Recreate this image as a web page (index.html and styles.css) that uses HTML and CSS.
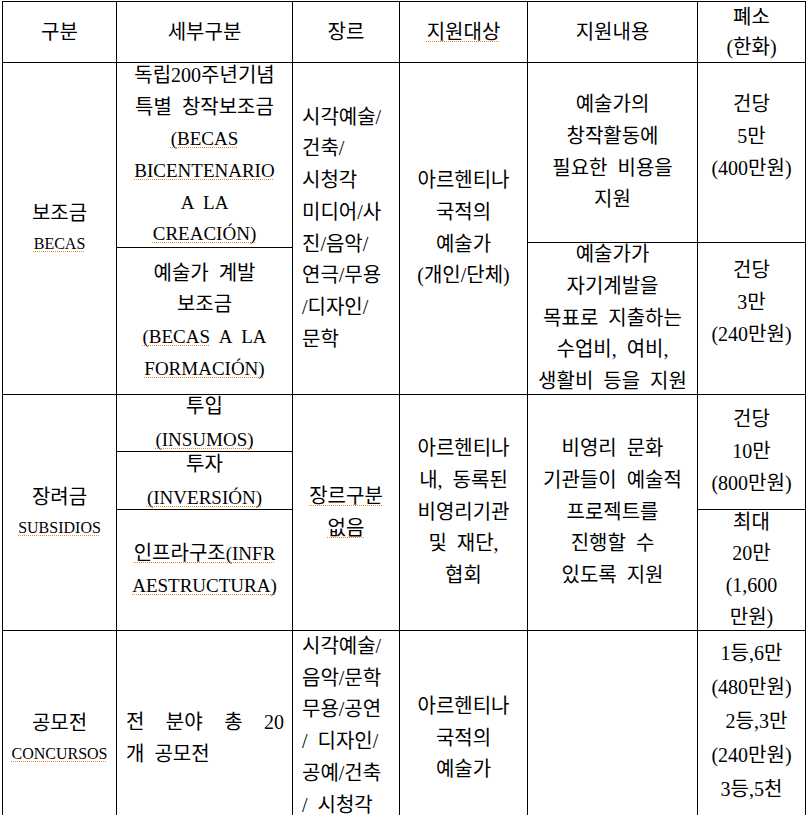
FILE: index.html
```html
<!DOCTYPE html>
<html lang="ko">
<head>
<meta charset="utf-8">
<title>지원 제도</title>
<link rel="stylesheet" href="styles.css">
</head>
<body>
<div class="sheet">
  <div class="cell head col1 r-h">구분</div>
  <div class="cell head col2 r-h">세부구분</div>
  <div class="cell head col3 r-h">장르</div>
  <div class="cell head col4 r-h"><span class="sp">지원대상</span></div>
  <div class="cell head col5 r-h">지원내용</div>
  <div class="cell head col6 r-h"><div>폐소<br>(한화)</div></div>

  <div class="cell gubun col1 r-becas"><div>보조금<br><span class="lat-s sp">BECAS</span></div></div>
  <div class="cell col2 r-bicent"><div>독립200주년기념<br>특별 창작보조금<br><span class="lt sp">(BECAS</span><br><span class="lt sp">BICENTENARIO</span><br><span class="lt">A LA</span><br><span class="lt sp">CREACIÓN)</span></div></div>
  <div class="cell col2 r-form"><div>예술가 계발<br>보조금<br><span class="lt"><span class="sp">(BECAS</span> A LA</span><br><span class="lt sp">FORMACIÓN)</span></div></div>
  <div class="cell left col3 r-becas"><div>시각예술/<br>건축/<br>시청각<br>미디어/사<br>진/음악/<br>연극/무용<br>/디자인/<br>문학</div></div>
  <div class="cell col4 r-becas"><div>아르헨티나<br>국적의<br>예술가<br>(개인/단체)</div></div>
  <div class="cell col5 r-top"><div>예술가의<br>창작활동에<br>필요한 비용을<br>지원</div></div>
  <div class="cell col6 r-top"><div>건당<br>5만<br>(400만원)<br>&nbsp;</div></div>
  <div class="cell col5 r-low"><div>예술가가<br>자기계발을<br>목표로 지출하는<br>수업비, 여비,<br>생활비 등을 지원</div></div>
  <div class="cell col6 r-low"><div>건당<br>3만<br>(240만원)<br>&nbsp;</div></div>

  <div class="cell gubun col1 r-sub"><div>장려금<br><span class="lat-s sp">SUBSIDIOS</span></div></div>
  <div class="cell tight col2 r-ins"><div>투입<br><span class="lt sp">(INSUMOS)</span></div></div>
  <div class="cell tight col2 r-inv"><div>투자<br><span class="lt sp">(INVERSIÓN)</span></div></div>
  <div class="cell col2 r-infra"><div><span class="sp">인프라구조<span class="lt">(INFR</span></span><br><span class="lt sp">AESTRUCTURA)</span></div></div>
  <div class="cell col3 r-sub"><div><span class="sp">장르구분</span><br><span class="sp">없음</span></div></div>
  <div class="cell col4 r-sub"><div>아르헨티나<br>내, 동록된<br>비영리기관<br>및 재단,<br>협회</div></div>
  <div class="cell col5 r-sub"><div>비영리 문화<br>기관들이 예술적<br>프로젝트를<br>진행할 수<br>있도록 지원</div></div>
  <div class="cell col6 r-sub10"><div>건당<br>10만<br>(800만원)</div></div>
  <div class="cell col6 r-infra"><div>최대<br>20만<br>(1,600<br>만원)</div></div>

  <div class="cell gubun col1 r-con"><div>공모전<br><span class="lat-s sp">CONCURSOS</span></div></div>
  <div class="cell spread col2 r-con">
    <div class="just"><span>전</span><span>분야</span><span>총</span><span>20</span></div>
    <div class="plain">개 공모전</div>
  </div>
  <div class="cell left top col3 r-con"><div>시각예술/<br>음악/문학<br>무용/공연<br>/ 디자인/<br>공예/건축<br>/ 시청각</div></div>
  <div class="cell col4 r-con"><div>아르헨티나<br>국적의<br>예술가</div></div>
  <div class="cell col5 r-con"></div>
  <div class="cell prize col6 r-con"><div>1등,6만<br>(480만원)<br>&nbsp;2등,3만<br>(240만원)<br>3등,5천</div></div>
</div>
</body>
</html>
```

FILE: styles.css
```css
html, body {
  margin: 0;
  padding: 0;
  background: #fff;
  overflow: hidden;
}

body {
  font-family: "Liberation Serif", "Noto Sans CJK KR", serif;
  font-size: 20px;
  color: #000;
}

.sheet {
  display: grid;
  grid-template-columns: 113px 175px 106px 127px 169px 107px;
  grid-template-rows: 60px 179px 4px 146px 56px 57px 120px 215px;
  gap: 1px;
  padding: 1px;
  background: #000;
  width: max-content;
  margin: 1px 0 0 2px;
}

.cell {
  background: #fff;
  display: flex;
  flex-direction: column;
  justify-content: center;
  align-items: center;
  text-align: center;
  line-height: 31.7px;
  word-spacing: 5px;
  white-space: nowrap;
  min-width: 0;
  min-height: 0;
}

.head { line-height: 30px; }

.gubun { line-height: 29px; }

.tight { line-height: 33px; }

.prize {
  line-height: 34px;
  justify-content: flex-start;
  padding-top: 5px;
}

.left {
  align-items: flex-start;
  text-align: left;
  padding-left: 9px;
}

.top {
  justify-content: flex-start;
  padding-top: 0;
}

.spread {
  align-items: stretch;
  text-align: left;
  padding: 0 8px 0 9px;
}

.just {
  display: flex;
  justify-content: space-between;
}

.plain { text-align: left; }

.lt { font-size: 19px; }

.lat-s { font-size: 16px; }

.sp {
  text-decoration-line: underline;
  text-decoration-style: dotted;
  text-decoration-color: #f08a24;
  text-decoration-thickness: 1px;
  text-underline-offset: 2px;
  text-decoration-skip-ink: none;
}

/* grid placement */
.col1 { grid-column: 1; }
.col2 { grid-column: 2; }
.col3 { grid-column: 3; }
.col4 { grid-column: 4; }
.col5 { grid-column: 5; }
.col6 { grid-column: 6; }

.r-h { grid-row: 1; }
.r-becas { grid-row: 2 / 5; }
.r-bicent { grid-row: 2 / 4; }
.r-form { grid-row: 4 / 5; }
.r-top { grid-row: 2 / 3; }
.r-low { grid-row: 3 / 5; }
.r-sub { grid-row: 5 / 8; }
.r-ins { grid-row: 5 / 6; }
.r-inv { grid-row: 6 / 7; }
.r-infra { grid-row: 7 / 8; }
.r-sub10 { grid-row: 5 / 7; }
.r-con { grid-row: 8 / 9; }
```
